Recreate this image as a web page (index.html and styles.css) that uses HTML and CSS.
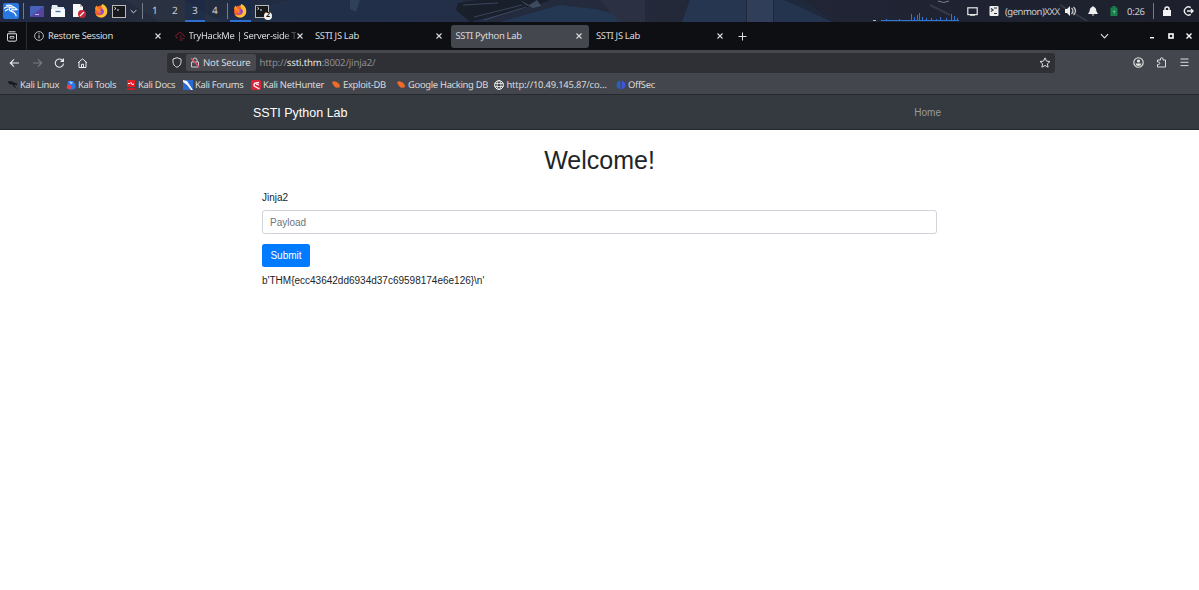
FILE: index.html
```html
<!DOCTYPE html>
<html lang="en">
<head>
	<meta charset="UTF-8">
	<meta name="viewport" content="width=device-width, initial-scale=1.0">
	<title>SSTI Python Lab</title>
	<link rel="stylesheet" href="styles.css">
</head>
<body>
	<!-- shared icons -->
	<svg class="defs" width="0" height="0">
		<symbol id="close" viewBox="0 0 8 8"><path d="M1.500 1.500l5 5M6.500 1.500l-5 5" stroke="currentColor" stroke-width="1.1" fill="none"/></symbol>
		<symbol id="firefox" viewBox="0 0 14 14">
			<circle cx="7" cy="7.500" r="6" fill="#f9602c"/>
			<path d="M8.500 0c3 1.500 5 4 4.800 7.500C13 11.500 10 13.500 7 13.500 5 13.500 3 12.500 2 11c3 1 7 .5 8-2.500C10.700 6 8 4.500 7.500 3 7.200 2 7.500 1 8.500 0z" fill="#ffc235"/>
			<path d="M1 5C1 3 2 2 3 1.500 3 3 4 3.500 5 3.800L3 7z" fill="#ff8a24"/>
			<circle cx="6.800" cy="7.600" r="2.800" fill="#8a48d8"/>
			<path d="M3 5.500c2-1 3.500-.3 4.500.4L5.500 7.200 8 8.500C6 10 4 9 3.500 7z" fill="#ff8327"/>
		</symbol>
		<symbol id="terminal" viewBox="0 0 14 13">
			<rect x=".5" y=".5" width="13" height="12" fill="#17191c" stroke="#b9b9b5"/>
			<path d="M2.500 2.500l1.500 1-1.500 1M5 5h2" stroke="#fff" stroke-width=".9" fill="none"/>
		</symbol>
		<symbol id="chevron" viewBox="0 0 10 6"><path d="M1 1l4 4 4-4" stroke="currentColor" stroke-width="1.300" fill="none"/></symbol>
		<symbol id="bug" viewBox="0 0 10 9"><path d="M1 2l2-.8 2 .6 2 1 1.200 1.500.8 1.200-.5 1 .2 1.200-1.700-.2-2 .2L3.500 6.500 2 4.500z" fill="#f26a28"/></symbol>
	</svg>

	<div class="panel">
		<svg class="wallpaper" width="1199" height="22" viewBox="0 0 1199 22">
			<path d="M125 0h60l35 22h-60z" fill="#303847" opacity=".5"/>
			<path d="M200 22l90-22h170l30 22z" fill="#243350" opacity=".5"/>
			<path d="M350 0h10l-4 12-6-3z" fill="#2f4059"/>
			<path d="M458 3l20-3h72l-10 4-70 18-14-12z" fill="#1a1f2c"/>
			<path d="M474 17l48-12M484 20l42-13M463 5l35-2" stroke="#46566c" stroke-width=".7"/>
			<path d="M520 0l9 5 8-5 4 6-8 2-7-3z" fill="#546579" opacity=".6"/>
			<path d="M500 22l60-17 35 4 50 13z" fill="#253853"/>
			<path d="M600 0h45v22h-26z" fill="#2b3043"/>
			<path d="M690 0h56v22h-64z" fill="#273650"/>
			<path d="M747 0h26v22h-26z" fill="#303e59"/>
			<path d="M774 0h12l46 22h-58z" fill="#24344f"/>
			<path d="M784 0h20l30 22z" fill="#1e293c"/>
			<path d="M938 1q6 3 11 0" stroke="#7a828f" fill="none"/>
			<path d="M1060 5l27 16M930 5l20 10" stroke="#434956" stroke-width="2" opacity=".6"/>
			<path d="M873 20.500h3" stroke="#9ec0b0"/>
			<path d="M881 20.500h78M886.500 19v2M892.500 20v1M899.500 19v2M911.500 14v7M914.500 17v4M917.500 15v6M919.500 13v8M922.500 17v4M926.500 18v3M931.500 18v3M936.500 19v2M940.500 17v4M946.500 18v3M951.500 14v7M954.500 16v5M957.500 18v3" stroke="#2f78d8"/>
		</svg>
		<div class="slot kali"><svg width="16" height="16" viewBox="0 0 16 16"><rect width="16" height="16" rx="2" fill="#2878df"/><path d="M1 5.500C3 3.500 6 3.500 9 5l2.500-.7L14 6.500l-3 .3C9 6.300 8 7 8.300 8.300c2.400.4 4.200 1.700 5 5M8.300 8.300C6 7.500 6 6 7 5M3 2.500c2.500-.8 5.500-.3 7.500 1.500M2 8l3.500-2" fill="none" stroke="#fff" stroke-width="1.200"/></svg></div>
		<span class="sep"></span>
		<div class="launchers">
			<svg width="14" height="11" viewBox="0 0 14 11"><rect width="14" height="11" rx="1" fill="#4861b9"/><path d="M0 11L14 0v11z" fill="#5844a0"/><path d="M5 8.500h4" stroke="#b8bce8"/></svg>
			<svg width="14" height="12" viewBox="0 0 14 12"><path d="M0 1h5l1 2h8v9H0z" fill="#5687d5"/><path d="M1 0h5l1 2h6v3H1z" fill="#e4eaf3"/><path d="M0 4h14v8H0z" fill="#f7f8fa"/><path d="M4.500 6.500h5" stroke="#4476bd" stroke-width="1.400"/></svg>
			<svg width="14" height="14" viewBox="0 0 14 14"><path d="M1 0h7l3 3v10H1z" fill="#f7f7f7"/><path d="M8 0l3 3H8z" fill="#bbb"/><circle cx="10" cy="10" r="4" fill="#c92536"/><path d="M8 12l4-4" stroke="#fff" stroke-width="1.200"/></svg>
			<svg width="14" height="14"><use href="#firefox"/></svg>
			<svg class="term" width="14" height="13"><use href="#terminal"/></svg>
		</div>
		<svg class="more" width="7" height="5"><use href="#chevron"/></svg>
		<span class="sep"></span>
		<div class="workspaces"><span>1</span><span>2</span><span class="current">3</span><span>4</span></div>
		<span class="sep"></span>
		<div class="task current"><svg width="14" height="14"><use href="#firefox"/></svg></div>
		<div class="task"><svg width="14" height="13"><use href="#terminal"/></svg><span class="badge">2</span></div>
		<div class="tray">
			<svg class="tray-screen" width="11" height="9" viewBox="0 0 11 9"><rect x=".8" y=".8" width="9.400" height="6.800" fill="none" stroke="#e8e8e8" stroke-width="1.200"/><path d="M3 8h5" stroke="#e8e8e8" stroke-width="1.500"/></svg>
			<svg class="tray-clip" width="10" height="10" viewBox="0 0 10 10"><rect x=".5" width="9" height="10" rx="1" fill="#ececec"/><path d="M2 2.500l2 1.500-2 1.500M5 2h3M5 7.500h3" fill="none" stroke="#252a36" stroke-width="1.200"/></svg>
			<span class="genmon">(genmon)XXX</span>
			<svg class="tray-sound" width="12" height="10" viewBox="0 0 12 10"><path d="M0 3h2l3-3v10L2 7H0z" fill="#eee"/><path d="M6.500 2q3 3 0 6M8.500 1q4 4 0 8" fill="none" stroke="#ccc" stroke-width="1.200"/></svg>
			<svg class="tray-bell" width="10" height="10" viewBox="0 0 10 10"><path d="M5 0l1 1c2 .5 2.300 2.500 2.300 4L10 8H0l1.700-3c0-1.500.3-3.500 2.300-4zM3.700 8.500h2.600L5 10z" fill="#eee"/></svg>
			<svg class="tray-battery" width="8" height="10" viewBox="0 0 8 10"><path d="M.5 1.500h2V0h3v1.500h2V10h-7z" fill="#19804c"/><path d="M4.500 3L2.800 6H4v2L5.500 5H4z" fill="#6cc999"/></svg>
			<span class="clock">0:26</span>
			<span class="sep"></span>
			<svg class="tray-lock" width="8" height="10" viewBox="0 0 8 10"><path d="M2 5V3a2 2 0 014 0v2" fill="none" stroke="#f2f2f2" stroke-width="1.500"/><rect y="4" width="8" height="6" fill="#f2f2f2"/></svg>
			<svg width="11" height="10" viewBox="0 0 11 10"><path d="M7.700 1.700A4 4 0 107.700 8.300M4 5h6M8 3l2 2-2 2" fill="none" stroke="#eee" stroke-width="1.400"/></svg>
		</div>
	</div>

	<div class="tabbar">
		<div class="tab-view"><svg width="12" height="11" viewBox="0 0 12 11"><path d="M2.500.8h7M1.500 2.800h9v6q0 1.400-1.400 1.400H2.900Q1.500 10.200 1.500 8.800z" fill="none" stroke="#ddd"/><path d="M4 5.500h4v1.700H4z" fill="none" stroke="#ddd" stroke-width=".8"/></svg></div>
		<div class="tab"><svg class="fav" width="10" height="10" viewBox="0 0 10 10"><circle cx="5" cy="5" r="4.400" fill="none" stroke="#ddd" stroke-width=".8"/><path d="M5 4.300v3M5 2.300v1" stroke="#ddd"/></svg><span class="title">Restore Session</span><svg class="x" width="8" height="8"><use href="#close"/></svg></div>
		<div class="tab"><svg class="fav" width="10" height="10" viewBox="0 0 10 10"><path d="M3 7H2Q.5 6.500.8 4.800 1 3.500 2.500 3.500 3 1.500 5 1.500q2 0 2.500 2Q9.500 3.500 9.300 6M4.500 5h2M5 7h2M7.500 7.500h2M4.500 9h3" fill="none" stroke="#8b1d2a" stroke-width=".9"/></svg><span class="title fade">TryHackMe | Server-side T</span><svg class="x" width="8" height="8"><use href="#close"/></svg></div>
		<div class="tab"><span class="title">SSTI JS Lab</span><svg class="x" width="8" height="8"><use href="#close"/></svg></div>
		<div class="tab selected"><span class="title">SSTI Python Lab</span><svg class="x" width="8" height="8"><use href="#close"/></svg></div>
		<div class="tab"><span class="title">SSTI JS Lab</span><svg class="x" width="8" height="8"><use href="#close"/></svg></div>
		<svg class="new-tab" width="9" height="9" viewBox="0 0 9 9"><path d="M4.500.5v8M.5 4.500h8" stroke="#ddd"/></svg>
		<div class="window-buttons">
			<svg width="9" height="6"><use href="#chevron"/></svg>
			<svg class="minimize" width="6" height="6" viewBox="0 0 6 6"><path d="M1 4.700h4" stroke="#fff" stroke-width="1.400"/></svg>
			<svg class="maximize" width="6" height="6" viewBox="0 0 6 6"><rect x="1" y="1" width="4" height="4" fill="none" stroke="#fff" stroke-width="1.600"/></svg>
			<svg width="8" height="8" viewBox="0 0 8 8"><path d="M1.500 1.500l5 5M6.500 1.500l-5 5" stroke="#fff" stroke-width="1.400"/></svg>
		</div>
	</div>

	<div class="toolbar">
		<div class="nav-buttons">
			<svg width="11" height="10" viewBox="0 0 11 10"><path d="M10 5H1.500M5 1.300L1.300 5 5 8.700" fill="none" stroke="#eee" stroke-width="1.100"/></svg>
			<svg width="11" height="10" viewBox="0 0 11 10"><path d="M1 5h8.500M6 1.300L9.700 5 6 8.700" fill="none" stroke="#7b7b82" stroke-width="1.100"/></svg>
			<svg width="11" height="10" viewBox="0 0 11 10"><path d="M9.500 5.500A4.100 4.100 0 118.200 2.100L9 3" fill="none" stroke="#eee" stroke-width="1.100"/><path d="M10 0v4H6z" fill="#eee"/></svg>
			<svg width="11" height="10" viewBox="0 0 11 10"><path d="M1 4.800L5.500.8l4.500 4M2 4v5.500h7V4M4.500 9.500V6.300h2v3.200" fill="none" stroke="#eee"/></svg>
		</div>
		<div class="urlbar">
			<svg class="shield" width="10" height="11" viewBox="0 0 10 11"><path d="M5 .7l4 1.400v2.400C9 7.500 7.500 9.300 5 10.300 2.500 9.300 1 7.500 1 4.500V2.100z" fill="none" stroke="#ddd"/></svg>
			<div class="not-secure">
				<svg width="10" height="11" viewBox="0 0 10 11"><path d="M3 5V3a2 2 0 014 0v2M1.500 5h7v5h-7z" fill="none" stroke="#ccc" stroke-width="1"/><path d="M1 1l8 9" stroke="#e34865" stroke-width="1.200"/></svg>
				<span>Not Secure</span>
			</div>
			<span class="url">http://<b>ssti.thm</b>:8002/jinja2/</span>
			<svg class="star" width="12" height="11" viewBox="0 0 12 11"><path d="M6 .9l1.500 3.200 3.500.4-2.600 2.300.7 3.400L6 8.500l-3.100 1.700.7-3.400L1 4.500l3.500-.4z" fill="none" stroke="#ddd" stroke-linejoin="round"/></svg>
		</div>
		<div class="toolbar-end">
			<svg width="11" height="11" viewBox="0 0 11 11"><circle cx="5.500" cy="5.500" r="4.700" fill="none" stroke="#e5e5e5" stroke-width="1.100"/><circle cx="5.500" cy="4" r="1.600" fill="#e5e5e5"/><path d="M2.500 6.500h6q-.5 2.500-3 2.500t-3-2.500z" fill="#e5e5e5"/></svg>
			<svg width="11" height="11" viewBox="0 0 11 11"><path d="M1.500 10V7.500h1q1.300 0 1.300-1.200T2.500 5h-1V3h3V2q0-1.300 1.200-1.300T7 2v1h2.500v7z" fill="none" stroke="#ddd"/></svg>
			<svg width="11" height="11" viewBox="0 0 11 11"><path d="M1.500 2h8M1.500 5.300h8M1.500 8.600h8" stroke="#ddd"/></svg>
		</div>
	</div>

	<div class="bookmarks">
		<a class="bm-linux"><svg width="10" height="10" viewBox="0 0 10 10"><path d="M0 1l4 .5L7 3l2 .5v1.700L6 4.500l1 2L9.500 9 6 7 4.500 4.500 1 4z" fill="#17181b"/></svg>Kali Linux</a>
		<a class="bm-tools"><svg width="10" height="10" viewBox="0 0 10 10"><path d="M2 1h5l2.500 3v4L7 9.500H3L1 7z" fill="#2d78e8"/><circle cx="3" cy="7" r="2.300" fill="#ef4146"/><path d="M3 1l4 1.500-2 2z" fill="#a9cdf5"/></svg>Kali Tools</a>
		<a class="bm-docs"><svg width="8" height="10" viewBox="0 0 8 10"><path d="M0 0h8v7H0z" fill="#df2028"/><path d="M0 8h8v2H0z" fill="#c71d24"/><path d="M1 3.500h2l1-1 1 2 2-.5" fill="none" stroke="#fff"/></svg>Kali Docs</a>
		<a class="bm-forums"><svg width="10" height="10" viewBox="0 0 10 10"><path d="M0 0h10v10H0z" fill="#2868d2"/><path d="M0 0l4 1 6 9H8L4 5 0 2z" fill="#f2f5fa"/></svg>Kali Forums</a>
		<a class="bm-nethunter"><svg width="10" height="10" viewBox="0 0 10 10"><rect width="10" height="10" rx="2" fill="#dc2339"/><path d="M8 2.500L4 3Q2 5 4 6.500L8.500 9M5 4l3 1" fill="none" stroke="#fff" stroke-width="1.300"/></svg>Kali NetHunter</a>
		<a class="bm-exploit"><svg width="10" height="9"><use href="#bug"/></svg>Exploit-DB</a>
		<a class="bm-google"><svg width="10" height="9"><use href="#bug"/></svg>Google Hacking DB</a>
		<a class="bm-http"><svg width="10" height="10" viewBox="0 0 10 10"><circle cx="5" cy="5" r="4.400" fill="none" stroke="#eee"/><ellipse cx="5" cy="5" rx="2" ry="4.400" fill="none" stroke="#eee" stroke-width=".8"/><path d="M.5 3.500h9M.5 6.500h9" stroke="#eee" stroke-width=".8"/></svg>http://10.49.145.87/co…</a>
		<a class="bm-offsec"><svg width="10" height="10" viewBox="0 0 10 10"><path d="M4.400.8v8.400Q.5 8.500.5 5T4.400.8z" fill="#2463c4"/><path d="M5.600.8v8.400Q9.500 8.500 9.500 5T5.600.8z" fill="#4152dc"/></svg>OffSec</a>
	</div>

	<header class="navbar">
		<div class="navbar-inner">
			<a class="brand">SSTI Python Lab</a>
			<a class="home">Home</a>
		</div>
	</header>
	<main class="container">
		<h1>Welcome!</h1>
		<form>
			<label for="payload">Jinja2</label>
			<input type="text" id="payload" name="payload" placeholder="Payload">
			<button type="button">Submit</button>
		</form>
		<p>b'THM{ecc43642dd6934d37c69598174e6e126}\n'</p>
	</main>
</body>
</html>
```
FILE: styles.css
```css
* {
	box-sizing: border-box;
}
body {
	margin: 0;
	height: 590px;
	overflow: hidden;
	background: #fff;
	font-family: "Noto Sans", sans-serif;
	font-size: 9.4px;
	letter-spacing: -.3px;
	text-rendering: geometricPrecision;
	color: #dcdcdf;
}
svg {
	display: block;
	flex: none;
}
.defs {
	position: absolute;
}

/* desktop panel */
.panel {
	position: relative;
	display: flex;
	align-items: center;
	height: 22px;
	padding-left: 3px;
	background: linear-gradient(90deg, #202a45, #252c3c 160px, #202b43 300px, #252b3c 600px, #202434 850px, #1d202c);
	color: #ccd0d6;
	font-size: 9.5px;
}
.wallpaper {
	position: absolute;
	left: 0;
	top: 0;
}
.panel > *:not(.wallpaper) {
	position: relative;
}
.sep {
	width: 1px;
	height: 16px;
	background: #777b85;
}
.kali {
	width: 20px;
}
.launchers {
	display: flex;
	align-items: center;
	gap: 7.2px;
	margin-left: 6px;
}
.launchers .term {
	margin-left: -3px;
}
.more {
	margin: 0 5px 0 4px;
	color: #e6e6e8;
}
.workspaces {
	display: flex;
	margin-left: 2px;
	font-size: 10px;
}
.workspaces span {
	width: 20px;
	height: 22px;
	line-height: 21px;
	text-align: center;
}
.workspaces .current,
.task.current {
	background: rgba(20, 40, 80, .4);
	border-bottom: 2px solid #2f6fd1;
}
.workspaces + .sep {
	margin-left: 2px;
}
.task {
	display: flex;
	align-items: center;
	justify-content: center;
	width: 21px;
	height: 22px;
}
.task.current {
	margin-left: 2px;
	padding-top: 1px;
}
.task + .task {
	margin-left: 1px;
}
.badge {
	position: absolute;
	left: 12px;
	top: 12px;
	width: 8px;
	height: 8px;
	border-radius: 50%;
	background: #f4f4f4;
	color: #111;
	font-size: 7px;
	font-weight: bold;
	line-height: 8px;
	text-align: center;
}
.tray {
	display: flex;
	align-items: center;
	margin-left: auto;
	padding-right: 5px;
}
.tray-clip {
	margin: 0 6px 0 11px;
}
.genmon {
	width: 60px;
	letter-spacing: -.5px;
	white-space: nowrap;
}
.tray-bell {
	margin: 0 12px 0 11px;
}
.clock {
	width: 26px;
	margin-left: 9px;
}
.tray-lock {
	margin: 0 12px 0 9px;
}

/* browser tabs */
.tabbar {
	display: flex;
	align-items: center;
	height: 28px;
	background: #0e0f13;
}
.tab-view {
	display: flex;
	align-items: center;
	justify-content: center;
	width: 27px;
	height: 28px;
	padding-right: 2px;
	border-right: 1px solid #2b2c32;
}
.tab {
	display: flex;
	align-items: center;
	width: 138px;
	height: 23px;
	margin-left: 2.5px;
	padding: 0 6px 1px 4.5px;
	border-radius: 3px;
}
.tab.selected {
	background: #44474e;
}
.fav {
	margin-right: 4px;
}
.title {
	flex: 1;
	white-space: nowrap;
}
/* long title runs out under the close button */
.fade {
	letter-spacing: -.32px;
	-webkit-mask-image: linear-gradient(90deg, #000 94px, transparent 112px);
	mask-image: linear-gradient(90deg, #000 94px, transparent 112px);
}
.new-tab {
	margin-left: 8px;
}
.window-buttons {
	display: flex;
	align-items: center;
	margin-left: auto;
	padding-right: 6px;
}
.minimize {
	margin: 0 13px 0 40px;
}
.maximize {
	margin-right: 11px;
}

/* address row */
.toolbar {
	display: flex;
	align-items: center;
	height: 25px;
	padding: 0 9px;
	background: #43464c;
}
.nav-buttons {
	display: flex;
	gap: 11.5px;
	width: 158px;
}
.urlbar {
	display: flex;
	align-items: center;
	width: 888px;
	height: 20px;
	padding: 0 4px 0 5px;
	border-radius: 3px;
	background: #2f3035;
	font-size: 9.6px;
	letter-spacing: -.2px;
}
.not-secure {
	display: flex;
	align-items: center;
	gap: 3px;
	width: 70px;
	height: 17px;
	margin-left: 4px;
	padding-left: 4px;
	border-radius: 2px;
	background: #47494f;
	white-space: nowrap;
}
.url {
	margin-left: 3.5px;
	color: #8d8e93;
	letter-spacing: -.16px;
}
.url b {
	color: #e6e6e9;
	font-weight: normal;
}
.star {
	margin-left: auto;
}
.toolbar-end {
	display: flex;
	gap: 12px;
	margin-left: auto;
}

/* bookmarks: one column per entry */
.bookmarks {
	display: grid;
	grid-template-columns: 58px 60px 57px 68px 80px 65px 98.5px 121.5px 60px;
	align-items: center;
	height: 20px;
	padding-left: 7.5px;
	border-bottom: 1px solid #26282e;
	background: #43464c;
}
.bookmarks a {
	display: flex;
	align-items: center;
	gap: 2.5px;
	white-space: nowrap;
}
.bm-docs svg {
	margin: 0 1px;
}
.bm-http {
	letter-spacing: -.2px;
}

/* page */
.navbar,
.container {
	font-family: "Liberation Sans", Arial, sans-serif;
	font-size: 10px;
	letter-spacing: 0;
	text-rendering: auto;
}
.navbar {
	height: 35px;
	background: #343a40;
	border-bottom: 1px solid #24292e;
}
.navbar-inner {
	display: flex;
	align-items: center;
	justify-content: space-between;
	width: 693px;
	height: 34px;
	margin: 0 auto;
	padding: 1px 5px 0 0;
}
.brand {
	color: #fff;
	font-size: 12.5px;
}
.home {
	color: #999c9f;
}
.container {
	width: 675px;
	margin: 0 auto;
	color: #212529;
	line-height: 15px;
}
h1 {
	margin: 15px 0;
	font-size: 25px;
	font-weight: 500;
	line-height: 30px;
	text-align: center;
}
label {
	display: block;
	margin-bottom: 5px;
}
input {
	display: block;
	width: 100%;
	height: 24px;
	margin-bottom: 9.5px;
	padding: 4px 7px;
	border: 1px solid #ced4da;
	border-radius: 3px;
	font: inherit;
}
input::placeholder {
	color: #6c757d;
}
button {
	display: block;
	width: 48px;
	height: 23.5px;
	padding: 0;
	border: 0;
	border-radius: 2.5px;
	background: #007bff;
	color: #fff;
	font: inherit;
}
p {
	margin: 6px 0;
}
```
